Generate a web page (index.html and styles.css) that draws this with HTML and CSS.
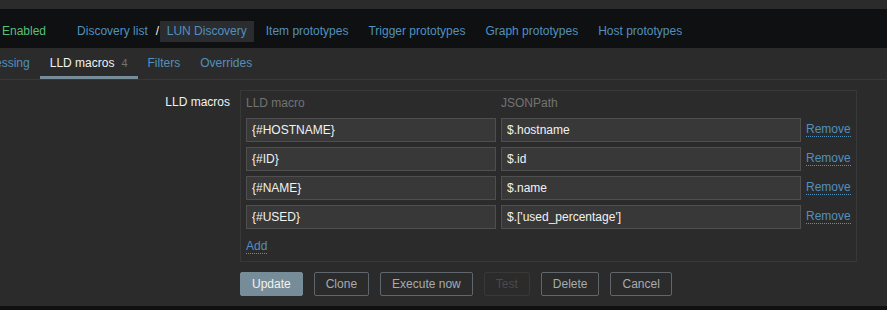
FILE: index.html
```html
<!DOCTYPE html>
<html lang="en">
<head>
    <meta charset="UTF-8">
    <title>LLD macros</title>
    <link rel="stylesheet" href="styles.css">
</head>
<body>
    <div class="top-strip"></div>

    <!-- breadcrumbs / host navigation -->
    <nav class="host-nav">
        <span class="status">Enabled</span>
        <a href="#" class="nav-item">Discovery list</a>
        <span class="sep">/</span>
        <a href="#" class="nav-item current">LUN Discovery</a>
        <a href="#" class="nav-item">Item prototypes</a>
        <a href="#" class="nav-item">Trigger prototypes</a>
        <a href="#" class="nav-item">Graph prototypes</a>
        <a href="#" class="nav-item">Host prototypes</a>
    </nav>

    <ul class="tabs">
        <li><a href="#">Preprocessing</a></li>
        <li class="active"><a href="#">LLD macros<span class="count">4</span></a></li>
        <li><a href="#">Filters</a></li>
        <li><a href="#">Overrides</a></li>
    </ul>

    <main class="form">
        <div class="form-row">
            <label class="form-label">LLD macros</label>
            <div class="macro-box">
                <div class="macro-table">
                    <div class="th">LLD macro</div>
                    <div class="th">JSONPath</div>
                    <div class="th"></div>

                    <input type="text" class="input" value="{#HOSTNAME}">
                    <input type="text" class="input" value="$.hostname">
                    <a href="#" class="link">Remove</a>

                    <input type="text" class="input" value="{#ID}">
                    <input type="text" class="input" value="$.id">
                    <a href="#" class="link">Remove</a>

                    <input type="text" class="input" value="{#NAME}">
                    <input type="text" class="input" value="$.name">
                    <a href="#" class="link">Remove</a>

                    <input type="text" class="input" value="{#USED}">
                    <input type="text" class="input" value="$.['used_percentage']">
                    <a href="#" class="link">Remove</a>

                    <div class="add-cell"><a href="#" class="link">Add</a></div>
                </div>
            </div>
        </div>

        <div class="buttons">
            <button class="btn primary">Update</button>
            <button class="btn">Clone</button>
            <button class="btn">Execute now</button>
            <button class="btn" disabled>Test</button>
            <button class="btn">Delete</button>
            <button class="btn">Cancel</button>
        </div>
    </main>

    <footer></footer>
</body>
</html>
```

FILE: styles.css
```css
* {
    margin: 0;
    padding: 0;
    box-sizing: border-box;
}

body {
    background: #2b2b2b;
    color: #f2f2f2;
    font-family: 'Liberation Sans', Arial, sans-serif;
    font-size: 12px;
    line-height: 14px;
    overflow: hidden;
}

a {
    color: #5290bd;
    text-decoration: none;
}

.top-strip {
    height: 9px;
    background: #2b2b2b;
}

/* host navigation */
.host-nav {
    display: flex;
    align-items: center;
    height: 39px;
    padding-top: 5px;
    background: #0e1012;
    white-space: nowrap;
}

.status {
    color: #5cbf77;
    margin: 0 24px 0 2px;
}

.nav-item {
    display: inline-block;
    height: 21px;
    line-height: 21px;
    padding: 0 7px;
    margin-right: 6px;
}

.nav-item.current {
    background: #2a2c2f;
    margin-right: 5px;
}

.sep {
    color: #f2f2f2;
    margin: 0 0 0 -5px;
    width: 4px;
}

/* tabs */
.tabs {
    display: flex;
    list-style: none;
    height: 32px;
    border-bottom: 1px solid #383838;
    margin-left: -57px;
    white-space: nowrap;
}

.tabs li {
    height: 31px;
    padding: 8px 10px 0;
    border-bottom: 3px solid transparent;
}

.tabs li.active {
    border-bottom-color: #768d99;
}

.tabs li.active a {
    color: #f2f2f2;
}

.count {
    color: #737373;
    font-size: 11px;
    margin-left: 7px;
}

/* form */
.form {
    padding-top: 10px;
    height: 226px;
}

.form-row {
    display: grid;
    grid-template-columns: 230px 617px;
    column-gap: 10px;
}

.form-label {
    text-align: right;
    padding-top: 5px;
}

.macro-box {
    border: 1px solid #383838;
    padding: 5px 4px 5px 5px;
}

.macro-table {
    display: grid;
    grid-template-columns: 250px 300px auto;
    column-gap: 5px;
    row-gap: 5px;
    align-items: center;
}

.th {
    color: #737373;
    padding-bottom: 3px;
}

.input {
    height: 24px;
    padding: 0 5px;
    background: #383838;
    border: 1px solid #4f4f4f;
    color: #f2f2f2;
    font-family: inherit;
    font-size: 12px;
    outline: none;
}

.link {
    justify-self: start;
    border-bottom: 1px dotted #5290bd;
    line-height: 13px;
}

.add-cell {
    grid-column: 1 / 4;
    height: 22px;
    padding-top: 5px;
}

/* buttons */
.buttons {
    display: flex;
    gap: 11px;
    margin: 10px 0 0 240px;
}

.btn {
    height: 24px;
    padding: 0 11px;
    background: transparent;
    border: 1px solid #5f676c;
    color: #a5abaf;
    font-family: inherit;
    font-size: 12px;
    border-radius: 2px;
}

.btn.primary {
    background: #768d99;
    border-color: #768d99;
    color: #f2f2f2;
}

.btn:disabled {
    border-color: #383838;
    color: #4a4a4a;
}

footer {
    height: 4px;
    background: #0e1012;
}
```
